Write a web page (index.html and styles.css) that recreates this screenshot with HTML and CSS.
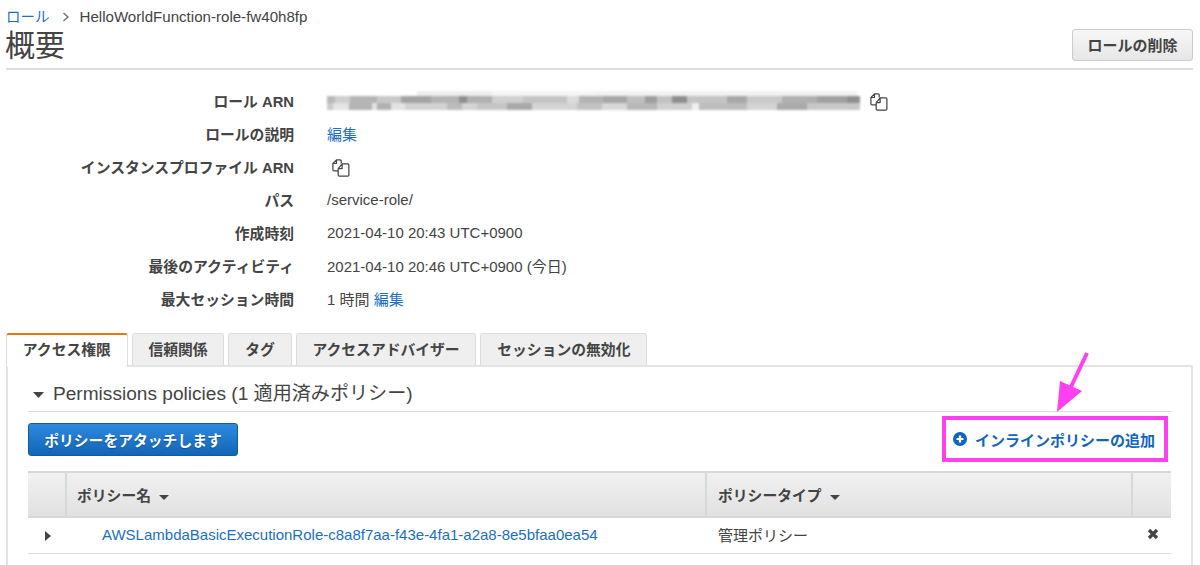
FILE: index.html
```html
<!DOCTYPE html>
<html lang="ja">
<head>
<meta charset="utf-8">
<title>概要</title>
<link rel="stylesheet" href="styles.css">
</head>
<body>
<svg class="defs" width="0" height="0"><defs>
<symbol id="copy" viewBox="0 0 16 16"><path d="M6.5 10.5H1.8a1 1 0 0 1-1-1V4L4 .8h3.2a1 1 0 0 1 1 1V4M4 .8V4H.8" fill="#fff" stroke="#444" stroke-width="1.1" stroke-linejoin="round"/><path d="M6.5 15.2a1 1 0 0 1-1-1V8.5L9 4.3h5a1 1 0 0 1 1 1v8.900a1 1 0 0 1-1 1zM9 4.300V8.500H5.500" fill="#fff" stroke="#444" stroke-width="1.1" stroke-linejoin="round"/></symbol>
</defs></svg>
<main class="page">
  <nav class="crumbs"><a href="#">ロール</a><svg class="chev" width="8" height="10" viewBox="0 0 8 10"><path d="M1.500 1l4.500 4-4.500 4" fill="none" stroke="#666" stroke-width="1.200"/></svg><span class="crumb-current">HelloWorldFunction-role-fw40h8fp</span></nav>
  <header class="head">
    <h1>概要</h1>
    <button class="btn-grey">ロールの削除</button>
  </header>
  <dl class="summary">
    <div class="row"><dt>ロール ARN</dt><dd><span class="blur"></span><svg class="copy copy-arn"><use href="#copy"/></svg></dd></div>
    <div class="row"><dt>ロールの説明</dt><dd><a href="#">編集</a></dd></div>
    <div class="row"><dt>インスタンスプロファイル ARN</dt><dd><svg class="copy copy-profile"><use href="#copy"/></svg></dd></div>
    <div class="row"><dt>パス</dt><dd>/service-role/</dd></div>
    <div class="row"><dt>作成時刻</dt><dd>2021-04-10 20:43 UTC+0900</dd></div>
    <div class="row"><dt>最後のアクティビティ</dt><dd>2021-04-10 20:46 UTC+0900 (今日)</dd></div>
    <div class="row"><dt>最大セッション時間</dt><dd>1 時間 <a href="#">編集</a></dd></div>
  </dl>
  <ul class="tabs">
    <li class="tab active">アクセス権限</li>
    <li class="tab">信頼関係</li>
    <li class="tab">タグ</li>
    <li class="tab">アクセスアドバイザー</li>
    <li class="tab">セッションの無効化</li>
  </ul>
  <section class="panel">
    <h2 class="section"><svg class="caret-down" width="11" height="6" viewBox="0 0 11 6"><path d="M0 0h11L5.500 6z" fill="#444"/></svg>Permissions policies (1 適用済みポリシー)</h2>
    <div class="actions">
      <button class="btn-blue">ポリシーをアタッチします</button>
      <a class="add" href="#"><svg width="14" height="14" viewBox="0 0 14 14"><circle cx="7" cy="7" r="7" fill="#1166bb"/><path d="M7 3.500v7M3.500 7h7" stroke="#fff" stroke-width="2.200"/></svg>インラインポリシーの追加</a>
    </div>
    <table class="policies">
      <thead>
        <tr>
          <th class="c1"></th>
          <th class="c2">ポリシー名<svg class="sort" width="10" height="5" viewBox="0 0 10 5"><path d="M0 0h10L5 5z" fill="#444"/></svg></th>
          <th class="c3">ポリシータイプ<svg class="sort" width="10" height="5" viewBox="0 0 10 5"><path d="M0 0h10L5 5z" fill="#444"/></svg></th>
          <th class="c4"></th>
        </tr>
      </thead>
      <tbody>
        <tr>
          <td class="c1 expand"><svg width="6" height="10" viewBox="0 0 6 10"><path d="M0 0l6 5-6 5z" fill="#444"/></svg></td>
          <td class="c2 name"><a href="#">AWSLambdaBasicExecutionRole-c8a8f7aa-f43e-4fa1-a2a8-8e5bfaa0ea54</a></td>
          <td class="c3">管理ポリシー</td>
          <td class="c4 remove"><svg width="12" height="12" viewBox="0 0 12 12"><path d="M2 2l8 8M10 2l-8 8" stroke="#444" stroke-width="3.200"/></svg></td>
        </tr>
      </tbody>
    </table>
  </section>
</main>
<div class="callout"></div>
<svg class="arrow" width="50" height="70" viewBox="0 0 50 70"><path d="M38 3L21 39" stroke="#ff40f0" stroke-width="4" fill="none"/><path d="M8 62L11 31 33 41z" fill="#ff40f0"/></svg>
</body>
</html>
```
FILE: styles.css
```css
* { box-sizing: border-box; }
html, body { margin: 0; height: 565px; overflow: hidden; }
body {
  font-family: "Liberation Sans", "Noto Sans CJK JP", sans-serif;
  font-size: 15px;
  color: #444;
  background: #fff;
  position: relative;
}
a { color: #1a6fc4; text-decoration: none; }
.defs { position: absolute; }
.page { padding: 0 7px 0 6px; }

.crumbs { height: 30px; padding-top: 4px; line-height: 18px; display: flex; align-items: center; }
.crumbs a { font-size: 14.500px; }
.crumb-current { font-size: 15.100px; }
.chev { margin: 0 10px 0 12px; }

.head { display: flex; justify-content: space-between; align-items: flex-start; height: 40px; border-bottom: 2px solid #ddd; }
.head h1 { margin: 0 0 0 -1px; font-size: 30px; font-weight: 400; line-height: 32px; color: #444; }
.btn-grey {
  width: 121px; height: 32px; margin-top: -1px; padding: 0 0 2px;
  font: bold 15px "Liberation Sans", "Noto Sans CJK JP", sans-serif;
  color: #444;
  background: linear-gradient(#f7f7f7, #e6e6e6);
  border: 1px solid #ccc; border-radius: 3px;
}

.summary { margin: 14px 0 0; }
.row { display: flex; height: 33px; align-items: center; }
.row dt { width: 288px; text-align: right; font-size: 14.800px; font-weight: 700; color: #444; }
.row dd { margin: 0 0 0 33px; display: flex; align-items: center; white-space: pre; }
.blur {
  display: block; width: 533px; height: 20px;
  background:
    linear-gradient(90deg, transparent 0 90px, #eeeeee 90px 165px, #f5f5f5 165px 270px, #f2f2f2 270px 530px, transparent 530px) 0 0 / 100% 5px no-repeat,
    linear-gradient(90deg, #b9b9b9 0 8px, #cfcfcf 8px 23px, #b5b5b5 23px 50px, #c9c9c9 50px 74px, #a3a3a3 74px 104px, #b4b4b4 104px 132px, #8f8f8f 132px 140px, #b1b1b1 140px 165px, #d0d0d0 165px 196px, #c4c4c4 196px 240px, #dcdcdc 240px 252px, #b3b3b3 252px 276px, #a6a6a6 276px 300px, #bfbfbf 300px 318px, #9d9d9d 318px 330px, #c2c2c2 330px 345px, #8e8e8e 345px 360px, #c4c4c4 360px 400px, #a8a8a8 400px 420px, #c9c9c9 420px 455px, #b0b0b0 455px 490px, #a0a0a0 490px 520px, #8f8f8f 520px 533px) 0 5px / 100% 7px no-repeat,
    linear-gradient(90deg, #c9c9c9 0 6px, #e4e4e4 6px 22px, #b4b4b4 22px 45px, #e2e2e2 45px 50px, #b2b2b2 50px 64px, #e3e3e3 64px 78px, #d2d2d2 78px 120px, #bcbcbc 120px 135px, #d4d4d4 135px 150px, #c6c6c6 150px 180px, #a9a9a9 180px 205px, #d4d4d4 205px 250px, #c2c2c2 250px 275px, #d8d8d8 275px 300px, #b8b8b8 300px 330px, #d0d0d0 330px 365px, #f0f0f0 365px 372px, #bdbdbd 372px 420px, #d4d4d4 420px 450px, #ababab 450px 480px, #c8c8c8 480px 533px) 0 12px / 100% 7px no-repeat;
  filter: blur(1px);
}
.copy { width: 18px; height: 18px; }
.copy-arn { margin-left: 10px; margin-top: 2px; }
.copy-profile { margin-left: 5px; margin-top: 2px; }

.tabs { display: flex; gap: 4px; margin: 18px 0 0; padding: 0; list-style: none; height: 33px; position: relative; font-size: 14.800px; }
.tab {
  height: 32px; padding: 0 15.800px; line-height: 32px; font-weight: 700; color: #444;
  background: #efefef; border: 1px solid #ddd; border-bottom: 0; border-radius: 3px 3px 0 0;
}
.tab.active {
  height: 34px; background: #fff; border-top: 2px solid #e47911; line-height: 31px;
  position: relative; z-index: 1; border-color: #e47911 #ddd transparent #ddd;
}
.panel { border: 2px solid #e4e4e4; border-width: 2px 2px 0 2px; padding: 0 20px; height: 200px; margin-top: -1px; }
.section {
  margin: 0; height: 45px; padding-top: 10px; font-size: 19.100px; font-weight: 400; line-height: 26px; color: #444;
  border-bottom: 1px solid #ddd; display: flex; align-items: center;
}
.caret-down { margin: 1px 9px 0 5px; }
.actions { display: flex; justify-content: space-between; align-items: center; margin-top: 11px; height: 33px; }
.btn-blue {
  width: 210px; height: 33px; padding: 0;
  font: bold 14.800px "Liberation Sans", "Noto Sans CJK JP", sans-serif;
  color: #fff; text-shadow: 0 1px 1px #0b4f8f;
  background: linear-gradient(#2d8ae0, #1265b5);
  border: 1px solid #155a9c; border-radius: 3px;
}
.add { display: flex; align-items: center; gap: 8px; font-size: 15px; font-weight: 700; color: #1166bb; padding-right: 16px; margin-top: -1px; }

.policies { width: 1143px; margin-top: 15px; border-collapse: collapse; table-layout: fixed; }
.policies th {
  height: 45px; padding: 0 10px 0 11px; text-align: left; font-size: 14.800px; font-weight: 700;
  background: linear-gradient(#f1f1f1, #e1e1e1);
  border: 2px solid #d8d8d8; border-width: 2px 2px 2px 0;
}
.policies th:first-child { border-left: 0; }
.policies th:last-child { border-right: 0; }
.policies th.c2 { padding-left: 10px; }
.sort { margin-left: 8px; vertical-align: 1px; }
.policies td { height: 36px; padding: 0 0 2px 12px; border-bottom: 1px solid #ddd; }
.c1 { width: 38px; }
.c3 { width: 426px; }
.c4 { width: 39px; }
.policies .expand { padding: 2px 0 0 17px; }
.policies .name { padding-left: 36px; }
.policies .remove { padding-left: 15px; }
.expand svg, .remove svg { display: block; }

.callout { position: absolute; left: 942px; top: 416px; width: 226px; height: 46px; border: 4px solid #ff40f0; }
.arrow { position: absolute; left: 1049px; top: 350px; }
```
